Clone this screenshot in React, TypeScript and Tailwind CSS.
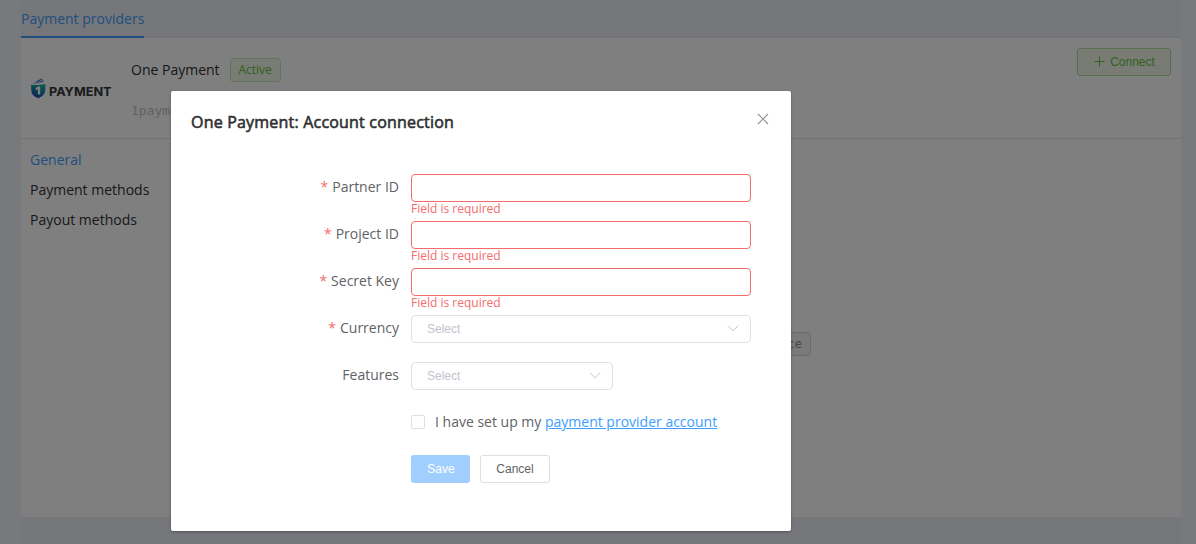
import React from "react";

function Chevron() {
  return (
    <svg width="12" height="12" viewBox="0 0 12 12" fill="none" stroke="#c0c4cc" strokeWidth="1">
      <path d="M1 2.7 6.1 7.8 11.2 2.7" />
    </svg>
  );
}

function Logo() {
  return (
    <div className="mt-px ml-px flex h-[22px] shrink-0 items-center gap-[3px]">
      <svg className="shrink-0" width="15" height="22" viewBox="0 0 15 22">
        <defs>
          <linearGradient id="shield" x1="0.8" y1="0" x2="0.4" y2="1">
            <stop offset="0" stopColor="#20b59c" />
            <stop offset="0.45" stopColor="#1590a8" />
            <stop offset="1" stopColor="#1a3fb0" />
          </linearGradient>
        </defs>
        <path d="M4.5 3.4 10.8 0.4 11.4 1.6 6 3.8Z" fill="#2b62b8" />
        <path d="M2 5.4 12 2.2 12.8 3.6 3 5.8Z" fill="#2f7fc0" />
        <path d="M0 6.7Q7.5 7.4 14.4 6Q14.8 12 13.8 15 11.8 18.6 7.4 20.2 2.6 18.6 0.8 15.2 0 12 0 6.7Z" fill="url(#shield)" />
        <path d="M4.5 10 7.2 8.4H9.2V16.6H6.9V11.2L5.2 12Z" fill="#fff" />
      </svg>
      <svg className="shrink-0 overflow-visible" width="64" height="20" viewBox="0 0 64 20">
        <text x="0" y="16.6" textLength="62.5" lengthAdjust="spacingAndGlyphs" className="fill-[#33343a] font-['Inter',sans-serif] text-[12px] font-bold">PAYMENT</text>
      </svg>
    </div>
  );
}

function Page() {
  return (
    <div className="flex h-full bg-[#f0f2f8] pl-[21px] pr-[15px] text-sm text-[#303133]">
      <div className="flex min-w-0 flex-1 flex-col bg-[#edeff5]">
        <div className="flex h-[38px] shrink-0 border-b-2 border-[#e4e7ed]">
          <div className="h-[38px] border-b-2 border-[#409eff] leading-[38px] text-[#409eff]">Payment providers</div>
        </div>
        <div className="flex h-[479px] flex-col bg-white">
          <div className="flex h-[101px] shrink-0 border-b border-[#e4e7ed] pr-2.5 pl-[9px]">
            <div className="flex w-[101px] items-center">
              <Logo />
            </div>
            <div className="flex flex-1 flex-col">
              <div className="mt-5 flex h-6 items-center gap-2.5">
                <span>One Payment</span>
                <span className="flex h-6 w-[51px] items-center justify-center rounded border border-[#c2e7b0] bg-[#f0f9eb] text-xs text-[#67c23a]">Active</span>
              </div>
              <div className="mt-[19px] font-['DejaVu_Sans_Mono',monospace] text-[13px] leading-5 text-[#c0c4cc]">1payment</div>
            </div>
            <button className="mt-2.5 flex h-7 w-[94px] items-center justify-center gap-[5px] rounded-[3px] border border-[#b3e19d] bg-[#f0f9eb] font-['Liberation_Sans',sans-serif] text-xs text-[#67c23a]">
              <svg width="12" height="12" viewBox="0 0 12 12" stroke="#67c23a" strokeWidth="1">
                <path d="M1.5 5.5H11.5M6.5 0.5V10.5" />
              </svg>
              Connect
            </button>
          </div>
          <div className="flex">
            <nav className="flex w-[150px] shrink-0 flex-col pt-1.5 pl-[9px] leading-[30px]">
              <a className="text-[#409eff]">General</a>
              <a>Payment methods</a>
              <a>Payout methods</a>
            </nav>
            <div className="mt-[193px] flex h-6 w-[640px] items-center justify-end rounded border border-[#d3d4d6] bg-[#f4f4f5] pr-2 font-['DejaVu_Sans_Mono',monospace] text-xs text-[#909399]">invoice</div>
          </div>
        </div>
      </div>
    </div>
  );
}

function Label({ text, required }: { text: string; required?: boolean }) {
  return (
    <div className="w-60 shrink-0 pr-3 text-right leading-[26px]">
      {required && <span className="mr-1 text-[#f56c6c]">*</span>}
      {text}
    </div>
  );
}

function TextField({ label }: { label: string }) {
  return (
    <div className="flex h-[47px]">
      <Label text={label} required />
      <div className="w-[340px]">
        <input className="block h-7 w-full rounded border border-[#f56c6c] bg-white px-[15px] outline-none" />
        <div className="pt-[1px] text-xs leading-3 text-[#f56c6c]">Field is required</div>
      </div>
    </div>
  );
}

function Select({ wide }: { wide?: boolean }) {
  return (
    <div className={`${wide ? "w-[340px]" : "w-[202px]"} flex h-7 items-center justify-between rounded border border-[#dcdfe6] pr-[11px] pl-[15px] font-['Liberation_Sans',sans-serif] text-xs text-[#c0c4cc]`}>
      Select
      <Chevron />
    </div>
  );
}

export default function App() {
  return (
    <div className="relative h-[544px] w-[1196px] overflow-hidden font-['Open_Sans',sans-serif]">
      <Page />
      <div className="absolute inset-0 bg-black/50 pt-[91px] pl-[171px]">
        <div className="h-[440px] w-[620px] rounded-xs bg-white text-sm text-[#606266] shadow-[0_1px_3px_rgba(0,0,0,0.3)]">
          <div className="flex justify-between px-5 pt-5">
            <h2 className="text-base leading-[22px] tracking-[0.2px] text-[#303133] [-webkit-text-stroke:0.6px_#303133]">One Payment: Account connection</h2>
            <svg className="mt-0.5 mr-0.5" width="12" height="12" viewBox="0 0 12 12" stroke="#909399" strokeWidth="1.1">
              <path d="M1 1 11 11M11 1 1 11" />
            </svg>
          </div>
          <form className="pt-[41px]">
            <TextField label="Partner ID" />
            <TextField label="Project ID" />
            <TextField label="Secret Key" />
            <div className="flex h-[47px]">
              <Label text="Currency" required />
              <Select wide />
            </div>
            <div className="flex h-[47px]">
              <Label text="Features" />
              <Select />
            </div>
            <div className="flex h-[46px] pl-60">
              <label className="flex h-[26px] items-center gap-2.5">
                <span className="h-3.5 w-3.5 rounded-xs border border-[#dcdfe6]" />
                <span>I have set up my <a className="text-[#409eff] underline">payment provider account</a></span>
              </label>
            </div>
            <div className="flex gap-2.5 pl-60 font-['Liberation_Sans',sans-serif] text-xs">
              <button className="h-7 w-[59px] rounded-[3px] bg-[#a0cfff] pl-px text-white">Save</button>
              <button className="h-7 w-[70px] rounded-[3px] border border-[#dcdfe6]">Cancel</button>
            </div>
          </form>
        </div>
      </div>
    </div>
  );
}
